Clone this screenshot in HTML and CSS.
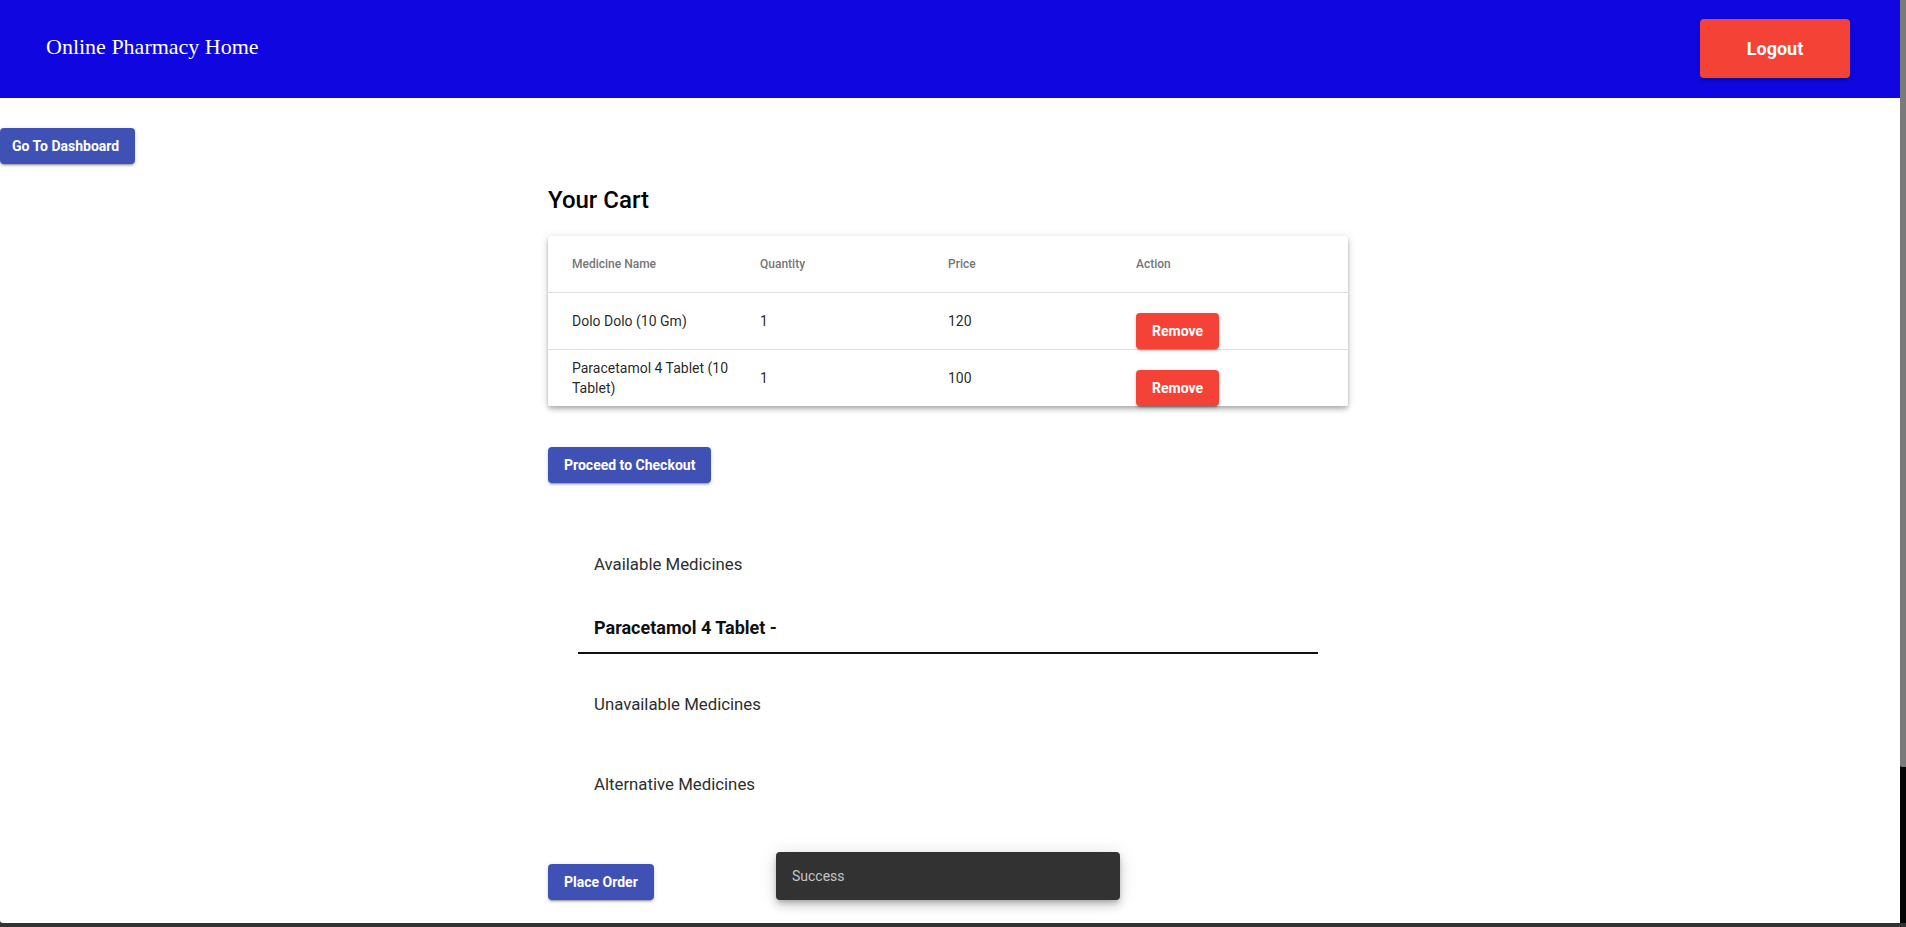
FILE: index.html
```html
<!DOCTYPE html>
<html lang="en">
<head>
<meta charset="utf-8">
<title>Online Pharmacy Home</title>
<link rel="stylesheet" href="styles.css">
</head>
<body>
<div class="frame">
  <div class="app">
    <header class="topbar">
      <div class="brand">Online Pharmacy Home</div>
      <button class="btn btn-red btn-logout">Logout</button>
    </header>

    <button class="btn btn-blue btn-dash">Go To Dashboard</button>

    <main class="cart">
      <h2 class="cart-title">Your Cart</h2>

      <div class="card">
        <div class="row row-head">
          <div class="cell">Medicine Name</div>
          <div class="cell">Quantity</div>
          <div class="cell">Price</div>
          <div class="cell">Action</div>
        </div>
        <div class="row">
          <div class="cell">Dolo Dolo (10 Gm)</div>
          <div class="cell">1</div>
          <div class="cell">120</div>
          <div class="cell cell-action"><button class="btn btn-red btn-small">Remove</button></div>
        </div>
        <div class="row row-last">
          <div class="cell">Paracetamol 4 Tablet (10 Tablet)</div>
          <div class="cell">1</div>
          <div class="cell">100</div>
          <div class="cell cell-action"><button class="btn btn-red btn-small">Remove</button></div>
        </div>
      </div>

      <button class="btn btn-blue btn-checkout">Proceed to Checkout</button>

      <section class="meds">
        <div class="meds-heading meds-available">Available Medicines</div>
        <div class="meds-item">Paracetamol 4 Tablet -</div>
        <div class="meds-heading meds-unavailable">Unavailable Medicines</div>
        <div class="meds-heading meds-alternative">Alternative Medicines</div>
      </section>

      <button class="btn btn-blue btn-order">Place Order</button>
    </main>

    <div class="snackbar">Success</div>
  </div>
  <div class="scrollbar"><div class="scroll-thumb"></div></div>
</div>
</body>
</html>
```

FILE: styles.css
```css
* { box-sizing: border-box; }

html, body {
  margin: 0;
  padding: 0;
  background: #333333;
  width: 1906px;
  height: 927px;
  overflow: hidden;
}

.frame {
  display: flex;
  width: 1906px;
  height: 923px;
}

.app {
  position: relative;
  width: 1900px;
  height: 923px;
  background: #ffffff;
  overflow: hidden;
  font-family: Roboto, "Liberation Sans", Arial, sans-serif;
  border-bottom-left-radius: 3px;
}

.scrollbar {
  width: 6px;
  height: 923px;
  background: #050505;
}

.scroll-thumb {
  height: 767px;
  background: #7a7a7a;
  border-bottom-left-radius: 2px;
}

/* header */
.topbar {
  display: flex;
  align-items: center;
  justify-content: space-between;
  height: 98px;
  padding: 0 50px 0 46px;
  background: #1006e0;
}

.brand {
  font-family: "Liberation Serif", "Times New Roman", serif;
  font-size: 22px;
  color: #ffffff;
  margin-bottom: 4px;
}

/* buttons */
.btn {
  display: inline-flex;
  align-items: center;
  justify-content: center;
  border: none;
  border-radius: 4px;
  font-family: Roboto, "Liberation Sans", Arial, sans-serif;
  font-weight: 700;
  font-size: 14px;
  color: #ffffff;
  height: 36px;
  padding: 0 16px;
  cursor: pointer;
  box-shadow: 0 3px 1px -2px rgba(0,0,0,0.2), 0 2px 2px 0 rgba(0,0,0,0.14), 0 1px 5px 0 rgba(0,0,0,0.12);
}

.btn-blue { background: #3f51b5; }
.btn-red { background: #f44336; }

.btn-logout {
  height: 59px;
  width: 150px;
  font-size: 18px;
  margin-bottom: 2px;
}

.btn-dash {
  margin-top: 30px;
  padding: 0 16px 0 12px;
}

.btn-small { padding: 0 16px; }

/* cart */
.cart {
  width: 800px;
  margin-left: 548px;
}

.cart-title {
  margin: 20px 0 20px;
  font-size: 24px;
  font-weight: 500;
  line-height: 32px;
  color: #000000;
}

.card {
  background: #ffffff;
  border-radius: 2px;
  box-shadow: 0 2px 4px -1px rgba(0,0,0,0.2), 0 4px 5px 0 rgba(0,0,0,0.14), 0 1px 10px 0 rgba(0,0,0,0.12);
}

.row {
  display: grid;
  grid-template-columns: 188px 188px 188px 236px;
  height: 57px;
  border-bottom: 1px solid #e0e0e0;
  font-size: 14px;
  line-height: 20px;
  color: rgba(0,0,0,0.87);
}

.row-last {
  height: 56px;
  border-bottom: none;
}

.row-head {
  font-size: 12px;
  font-weight: 500;
  color: #767676;
}

.cell {
  display: flex;
  align-items: center;
  padding: 0 0 0 24px;
}

.cell-action {
  align-items: flex-end;
}

.btn-checkout {
  margin-top: 41px;
}

/* medicines section */
.meds {
  width: 740px;
  margin: 69px 0 0 30px;
}

.meds-heading {
  padding: 0 16px;
  font-size: 16.8px;
  line-height: 24px;
  color: #2e2e2e;
}

.meds-item {
  margin-top: 40px;
  padding: 0 16px 12px;
  font-size: 18px;
  font-weight: 700;
  line-height: 24px;
  color: #111111;
  border-bottom: 2px solid #111111;
}

.meds-unavailable { margin-top: 38px; }
.meds-alternative { margin-top: 56px; }

.btn-order {
  margin-top: 68px;
}

/* snackbar */
.snackbar {
  position: absolute;
  left: 776px;
  top: 852px;
  width: 344px;
  height: 48px;
  padding: 14px 16px;
  background: #323232;
  color: #c4c4c4;
  font-size: 14px;
  line-height: 20px;
  border-radius: 4px;
  box-shadow: 0 3px 5px -1px rgba(0,0,0,0.2), 0 6px 10px 0 rgba(0,0,0,0.14), 0 1px 18px 0 rgba(0,0,0,0.12);
}
```
